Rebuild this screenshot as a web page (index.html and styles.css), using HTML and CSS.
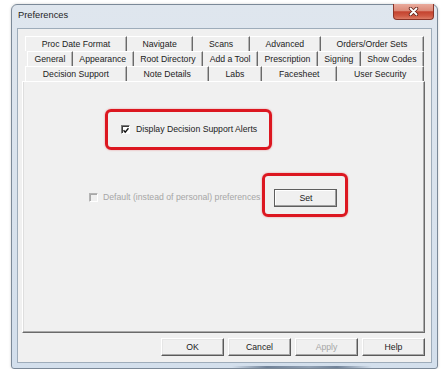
FILE: index.html
```html
<!DOCTYPE html>
<html lang="en">
<head>
<meta charset="utf-8">
<title>Preferences</title>
<link rel="stylesheet" href="styles.css">
</head>
<body>
<div class="window">
  <div class="titlebar">
    <span class="title">Preferences</span>
    <button class="close" aria-label="Close">
      <svg width="11" height="9" viewBox="0 0 11 9" aria-hidden="true">
        <path d="M2.5 1.5 L8.5 7.5 M8.5 1.5 L2.5 7.5" stroke="#5e2018" stroke-width="3.4" stroke-linecap="round"/>
        <path d="M2.5 1.5 L8.5 7.5 M8.5 1.5 L2.5 7.5" stroke="#ffffff" stroke-width="1.8" stroke-linecap="round"/>
      </svg>
    </button>
  </div>
  <div class="client">
    <div class="tabctl">
      <div class="tabrow row1">
        <div class="tab">Proc Date Format</div>
        <div class="tab">Navigate</div>
        <div class="tab">Scans</div>
        <div class="tab">Advanced</div>
        <div class="tab">Orders/Order Sets</div>
      </div>
      <div class="tabrow row2">
        <div class="tab">General</div>
        <div class="tab">Appearance</div>
        <div class="tab">Root Directory</div>
        <div class="tab">Add a Tool</div>
        <div class="tab">Prescription</div>
        <div class="tab">Signing</div>
        <div class="tab">Show Codes</div>
      </div>
      <div class="tabrow row3">
        <div class="tab selected">Decision Support</div>
        <div class="tab">Note Details</div>
        <div class="tab">Labs</div>
        <div class="tab">Facesheet</div>
        <div class="tab">User Security</div>
      </div>
      <div class="panel">
        <div class="mark mark1">
          <label class="chk">
            <span class="box">
              <svg width="7" height="7" viewBox="0 0 7 7" aria-hidden="true"><path d="M0.6 3.2 L2.6 5.4 L6.4 0.9" fill="none" stroke="#111111" stroke-width="1.7"/></svg>
            </span>
            <span class="lbl">Display Decision Support Alerts</span>
          </label>
        </div>
        <div class="defrow">
          <span class="box disabled"></span>
          <span class="lbl dis">Default (instead of personal) preferences</span>
          <div class="mark mark2">
            <button class="btn set">Set</button>
          </div>
        </div>
      </div>
    </div>
    <div class="buttons">
      <button class="btn">OK</button>
      <button class="btn">Cancel</button>
      <button class="btn disabled">Apply</button>
      <button class="btn">Help</button>
    </div>
  </div>
</div>
</body>
</html>
```
FILE: styles.css
```css
* { box-sizing: border-box; }

html, body {
  margin: 0;
  background: #ffffff;
  font-family: "Liberation Sans", Arial, sans-serif;
  color: #222222;
}

.window {
  margin: 4px 0 0 11px;
  width: 427px;
  height: 365px;
  border: 1px solid #7b8998;
  border-radius: 6px 6px 3px 3px;
  padding: 0 5px 5px 5px;
  display: flex;
  flex-direction: column;
  background:
    linear-gradient(90deg, rgba(80,100,125,0) 0%, rgba(80,100,125,.75) 25%, rgba(80,100,125,.5) 55%, rgba(80,100,125,.75) 75%, rgba(80,100,125,0) 100%) no-repeat 220px 100% / 140px 2px,
    linear-gradient(#dfe6ee, #d3dfec);
  box-shadow: 0 0 3px rgba(0,0,0,.18);
}

.titlebar {
  height: 23px;
  display: flex;
  align-items: flex-start;
}

.title {
  font-size: 9.3px;
  line-height: 12px;
  margin-top: 4px;
  padding-left: 1px;
  color: #1e1e1e;
}

.close {
  margin-left: auto;
  margin-right: -2px;
  margin-top: -1px;
  width: 41px;
  height: 16px;
  padding: 0;
  border: 1px solid #8a3428;
  border-top: none;
  border-radius: 0 0 4px 4px;
  background: linear-gradient(#e9aa9c 0%, #dc8a78 45%, #c4432f 52%, #cf5a44 80%, #dc7c66 100%);
  display: flex;
  align-items: center;
  justify-content: center;
}

.client {
  flex: 1;
  background: #f0f0f0;
  border: 1px solid #9eacba;
  padding: 7px 6px 0 4px;
  display: flex;
  flex-direction: column;
}

.tabctl {
  display: flex;
  flex-direction: column;
}

.tabrow {
  display: flex;
  height: 15px;
}

.row1 { margin: 0 1px 0 3px; }
.row2 { margin: 0 1px 0 5px; }
.row3 { margin: 0 1px 0 3px; }

.tab {
  flex: 1 1 auto;
  text-align: center;
  white-space: nowrap;
  font-size: 8.7px;
  line-height: 14px;
  border-top: 1px solid #ffffff;
  border-right: 1px solid #6a6a6a;
  box-shadow: inset -1px 0 0 #b4b4b4;
  color: #222222;
}

.row1 .tab:first-child,
.row2 .tab:first-child,
.row3 .tab:first-child {
  border-left: 1px solid #ffffff;
}

.panel {
  height: 252px;
  border-top: 1px solid #ffffff;
  border-left: 1px solid #ffffff;
  border-right: 1px solid #6a6a6a;
  border-bottom: 1px solid #6a6a6a;
  box-shadow: inset -1px -1px 0 #aaaaaa, inset 1px 0 0 #dedede;
  display: flex;
  flex-direction: column;
  align-items: flex-start;
}

.mark {
  border: 3px solid #dc1720;
  border-radius: 6px;
  box-shadow: 0 0 2px rgba(220, 20, 30, .45);
}

.mark1 {
  width: 167px;
  height: 41px;
  margin: 27px 0 0 82px;
  padding-left: 13px;
  display: flex;
  align-items: center;
}

.chk {
  display: flex;
  align-items: center;
  gap: 6px;
}

.box {
  width: 9px;
  height: 9px;
  flex: none;
  border: 1px solid;
  border-color: #7a7a7a #ffffff #ffffff #7a7a7a;
  box-shadow: inset 1px 1px 0 #3c3c3c;
  background: #ffffff;
  display: flex;
  align-items: center;
  justify-content: center;
  padding: 1px 0 0 1px;
}

.box.disabled {
  border-color: #b4b4b4 #ffffff #ffffff #b4b4b4;
  box-shadow: inset 1px 1px 0 #a8a8a8;
  background: #f0f0f0;
}

.lbl {
  font-size: 8.7px;
  line-height: 11px;
  white-space: nowrap;
}

.lbl.dis {
  color: #a6a6a6;
}

.defrow {
  margin: 23px 0 0 66px;
  display: flex;
  align-items: center;
  gap: 5px;
}

.defrow > .box,
.defrow > .lbl {
  margin-top: 4px;
}

.mark2 {
  width: 86px;
  height: 44px;
  margin-left: -3px;
  padding: 11px 0 0 9px;
}

.btn {
  width: 63px;
  height: 18px;
  padding: 0;
  font-family: "Liberation Sans", Arial, sans-serif;
  font-size: 8.7px;
  color: #222222;
  background: #f0f0f0;
  border: 1px solid;
  border-color: #ffffff #5a5a5a #5a5a5a #ffffff;
  box-shadow: inset -1px -1px 0 #a8a8a8, inset 1px 1px 0 #e6e6e6;
}

.btn.set {
  border: 1px solid #5e5e5e;
  box-shadow: inset -1px -1px 0 #a0a0a0, inset 1px 1px 0 #ffffff;
}

.btn.disabled {
  color: #a6a6a6;
}

.buttons {
  display: flex;
  justify-content: flex-end;
  gap: 4px;
  margin-top: 5px;
}
```
